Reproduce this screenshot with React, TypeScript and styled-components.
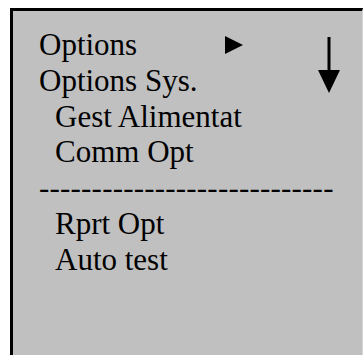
import React from "react";
import styled, { createGlobalStyle } from "styled-components";

const Global = createGlobalStyle`
  html, body { margin: 0; padding: 0; background: #ffffff; }
  body { width: 363px; height: 355px; overflow: hidden; }
`;

const Page = styled.div`
  padding: 8px 0 0 10px;
  height: 355px;
  box-sizing: border-box;
`;

const Screen = styled.div`
  position: relative;
  height: 100%;
  box-sizing: border-box;
  background: #c0c0c0;
  border-top: 3px solid #000;
  border-left: 3px solid #000;
  border-right: 1px solid #d4d4d4;
  padding: 16px 0 0 26px;
  font-family: "Liberation Serif", "Times New Roman", serif;
  font-size: 31px;
  color: #000;
`;

const Menu = styled.div`
  display: flex;
  flex-direction: column;
`;

const Row = styled.div<{ $indent?: boolean }>`
  height: 35.8px;
  line-height: 35.8px;
  display: flex;
  align-items: center;
  padding-left: ${(p) => (p.$indent ? "16px" : "0")};
  white-space: nowrap;
`;

const Label = styled.span`
  width: 186px;
`;

const Divider = styled.div`
  height: 35.8px;
  line-height: 35.8px;
  letter-spacing: 0.2px;
  white-space: nowrap;
`;

const Scroll = styled.svg`
  position: absolute;
  left: 305px;
  top: 26px;
`;

const Marker = () => (
  <svg width="18" height="18" viewBox="0 0 18 18">
    <polygon points="0,0 18,9 0,18" fill="#000" />
  </svg>
);

export default function App() {
  return (
    <>
      <Global />
      <Page>
        <Screen>
          <Menu>
            <Row>
              <Label>Options</Label>
              <Marker />
            </Row>
            <Row>Options Sys.</Row>
            <Row $indent>Gest Alimentat</Row>
            <Row $indent>Comm Opt</Row>
            <Divider>{"-".repeat(28)}</Divider>
            <Row $indent>Rprt Opt</Row>
            <Row $indent>Auto test</Row>
          </Menu>
          <Scroll width="22" height="56" viewBox="0 0 22 56">
            <rect x="9.5" y="0" width="3" height="36" fill="#000" />
            <polygon points="0,33 22,33 11,56" fill="#000" />
          </Scroll>
        </Screen>
      </Page>
    </>
  );
}
